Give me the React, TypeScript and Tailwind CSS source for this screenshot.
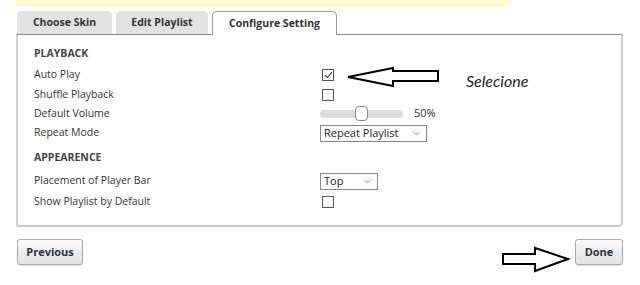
import React from "react";
import { ChevronDown } from "lucide-react";

// Configuração do player — aba "Configure Setting"

const font = { fontFamily: '"Open Sans", "Liberation Sans", sans-serif' };

const Checkbox: React.FC<{ checked?: boolean }> = ({ checked }) => (
  <div className="ml-[2px] w-[12px] h-[12px] border border-[#555] bg-white flex items-center justify-center">
    {checked && (
      <svg width="9" height="8" viewBox="0 0 9 8">
        <path d="M1 4.2 L3.4 6.5 L8 1.2" fill="none" stroke="#333" strokeWidth="1.1" />
      </svg>
    )}
  </div>
);

const FakeSelect: React.FC<{ value: string; width: string }> = ({ value, width }) => (
  <div
    className={`${width} h-[17px] border border-[#888] bg-white flex items-center justify-between pl-[3px] pr-[4px] text-[11px] text-[#222]`}
  >
    <span>{value}</span>
    <ChevronDown className="w-[11px] h-[11px] text-[#555]" strokeWidth={1.5} />
  </div>
);

const Row: React.FC<{ label: string; h: string; children?: React.ReactNode }> = ({
  label,
  h,
  children,
}) => (
  <div className={`flex items-center ${h}`}>
    <div className="w-[286px] text-[10.5px] text-[#333]">{label}</div>
    <div className="flex items-center">{children}</div>
  </div>
);

const Heading: React.FC<{ text: string; className?: string }> = ({ text, className }) => (
  <div className={`h-[20px] flex items-center text-[10.5px] font-bold text-[#444] ${className ?? ""}`}>
    {text}
  </div>
);

export default function App() {
  return (
    <div className="relative w-[640px] h-[285px] bg-white overflow-hidden" style={font}>
      {/* faixa amarela do topo */}
      <div className="ml-[14px] w-[494px] h-[6px] bg-[#fffcd2] rounded-b-[3px]" />

      {/* Abas */}
      <div className="mt-[5px] ml-[17px] flex items-end gap-[4px] relative z-10">
        <div className="w-[95px] h-[23px] bg-[#e2e2e2] rounded-t-[5px] flex items-center justify-center text-[10.5px] font-bold text-[#333]">
          Choose Skin
        </div>
        <div className="w-[92px] h-[23px] bg-[#e2e2e2] rounded-t-[5px] flex items-center justify-center text-[10.5px] font-bold text-[#333]">
          Edit Playlist
        </div>
        <div className="w-[125px] h-[24px] -mb-px bg-white border border-b-0 border-[#999] rounded-t-[5px] flex items-center justify-center text-[10.5px] font-bold text-[#333]">
          Configure Setting
        </div>
      </div>

      {/* Painel */}
      <div className="ml-[16px] w-[607px] h-[193px] border-t border-t-[#888] border-x-2 border-x-[#d0d0d0] border-b-2 border-b-[#c8c8c8] rounded-br-[5px] pl-[16px] pt-[9px]">
        <Heading text="PLAYBACK" />
        <div className="mt-[1px]">
          <Row label="Auto Play" h="h-[20px]">
            <Checkbox checked />
          </Row>
          <Row label="Shuffle Playback" h="h-[19px]">
            <Checkbox />
          </Row>
          <Row label="Default Volume" h="h-[19px]">
            <div className="relative w-[83px] h-[8px] rounded-full bg-[#dcdcdc]">
              <div className="absolute left-[35px] top-[-4px] w-[13px] h-[15px] bg-white border border-[#888] rounded-[4px]" />
            </div>
            <span className="ml-[11px] text-[11px] text-[#333]">50%</span>
          </Row>
          <Row label="Repeat Mode" h="h-[20px]">
            <FakeSelect value="Repeat Playlist" width="w-[107px]" />
          </Row>
        </div>
        <Heading text="APPEARENCE" className="mt-[5px]" />
        <div className="mt-[3px]">
          <Row label="Placement of Player Bar" h="h-[20px]">
            <FakeSelect value="Top" width="w-[58px]" />
          </Row>
          <Row label="Show Playlist by Default" h="h-[21px]">
            <Checkbox />
          </Row>
        </div>
      </div>

      {/* Botões */}
      <div className="mt-[12px] ml-[17px] w-[606px] flex justify-between">
        <button className="w-[66px] h-[26px] border border-[#aaa] rounded-[3px] bg-gradient-to-b from-[#fafafa] to-[#e2e2e2] shadow-[0_1px_1px_rgba(0,0,0,0.15)] text-[11px] font-bold text-[#2e3440]">
          Previous
        </button>
        <button className="w-[48px] h-[26px] border border-[#aaa] rounded-[3px] bg-gradient-to-b from-[#fafafa] to-[#e2e2e2] shadow-[0_1px_1px_rgba(0,0,0,0.15)] text-[11px] font-bold text-[#2e3440]">
          Done
        </button>
      </div>

      {/* Anotações por cima */}
      <svg className="absolute left-[345px] top-[64px]" width="96" height="26" viewBox="0 0 96 26">
        <path
          d="M3 13 L48 4 L48 7 L93 7 L93 17 L48 17 L48 22 Z"
          fill="white"
          stroke="black"
          strokeWidth="2"
          strokeLinejoin="miter"
        />
      </svg>
      <div
        className="absolute left-[466px] top-[69px] text-[16px] italic text-[#222]"
        style={{ fontFamily: 'Lato, "Open Sans", sans-serif' }}
      >
        Selecione
      </div>
      <svg className="absolute left-[500px] top-[245px]" width="72" height="30" viewBox="0 0 72 30">
        <path
          d="M3 9 L35 9 L35 3 L68 14 L35 26 L35 19 L3 19 Z"
          fill="white"
          stroke="black"
          strokeWidth="2"
        />
      </svg>
    </div>
  );
}
